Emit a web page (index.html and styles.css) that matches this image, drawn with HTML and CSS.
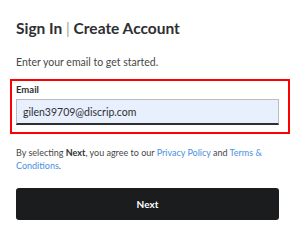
FILE: index.html
```html
<!DOCTYPE html>
<html>
<head>
    <title>Sign In</title>
    <link rel="stylesheet" href="styles.css">
</head>
<body>
    <main class="page">
        <h1 class="title">Sign In <span class="sep">|</span> Create Account</h1>
        <p class="lead">Enter your email to get started.</p>

        <div class="field highlight">
            <label class="field-label" for="email">Email</label>
            <input class="field-input" id="email" type="email" value="gilen39709@discrip.com">
        </div>

        <p class="terms">By selecting <b>Next</b>, you agree to our <a href="#">Privacy Policy</a> and <a href="#">Terms &amp; Conditions</a>.</p>

        <button class="next">Next</button>
    </main>
</body>
</html>
```

FILE: styles.css
```css
/* Reset default margin and padding */
body, h1, p {
    margin: 0;
    padding: 0;
}

body {
    background-color: #fff;
    font-family: Lato, "Noto Sans", sans-serif;
    color: #2e2f32;
}

.page {
    padding: 18px 21px 0 16px;
}

/* Heading */
.title {
    font-size: 15.5px;
    font-weight: 700;
    line-height: 20px;
}

.sep {
    font-weight: 300;
    color: #46474a;
}

.lead {
    margin-top: 18px;
    font-size: 10.5px;
    line-height: 13px;
    color: #46474a;
}

/* Email field, outlined in red */
.highlight {
    margin: 10px -11px 0 -6px;
    padding: 3px 9px 7px 4px;
    border: 2px solid #ff0000;
}

.field-label {
    display: block;
    font-size: 9.5px;
    font-weight: 700;
    line-height: 12px;
    margin-bottom: 3px;
}

.field-input {
    display: block;
    box-sizing: border-box;
    width: 100%;
    height: 26px;
    margin: 0;
    padding: 0 6px;
    border: 1px solid #b9bcc2;
    border-bottom: 2px solid #2e2f32;
    background-color: #e8f0fe;
    font-family: Lato, "Noto Sans", sans-serif;
    font-size: 10.5px;
    color: #2e2f32;
}

/* Terms text */
.terms {
    margin-top: 12px;
    font-size: 9px;
    line-height: 13px;
    color: #46474a;
}

.terms b {
    color: #2e2f32;
}

.terms a {
    color: #4a8fe0;
    text-decoration: none;
}

/* Next button */
.next {
    display: block;
    width: 100%;
    height: 32px;
    margin-top: 16px;
    background-color: #1b1c1e;
    color: white;
    border: none;
    border-radius: 3px;
    font-family: Lato, "Noto Sans", sans-serif;
    font-size: 10px;
    font-weight: 700;
    cursor: pointer;
}
```
